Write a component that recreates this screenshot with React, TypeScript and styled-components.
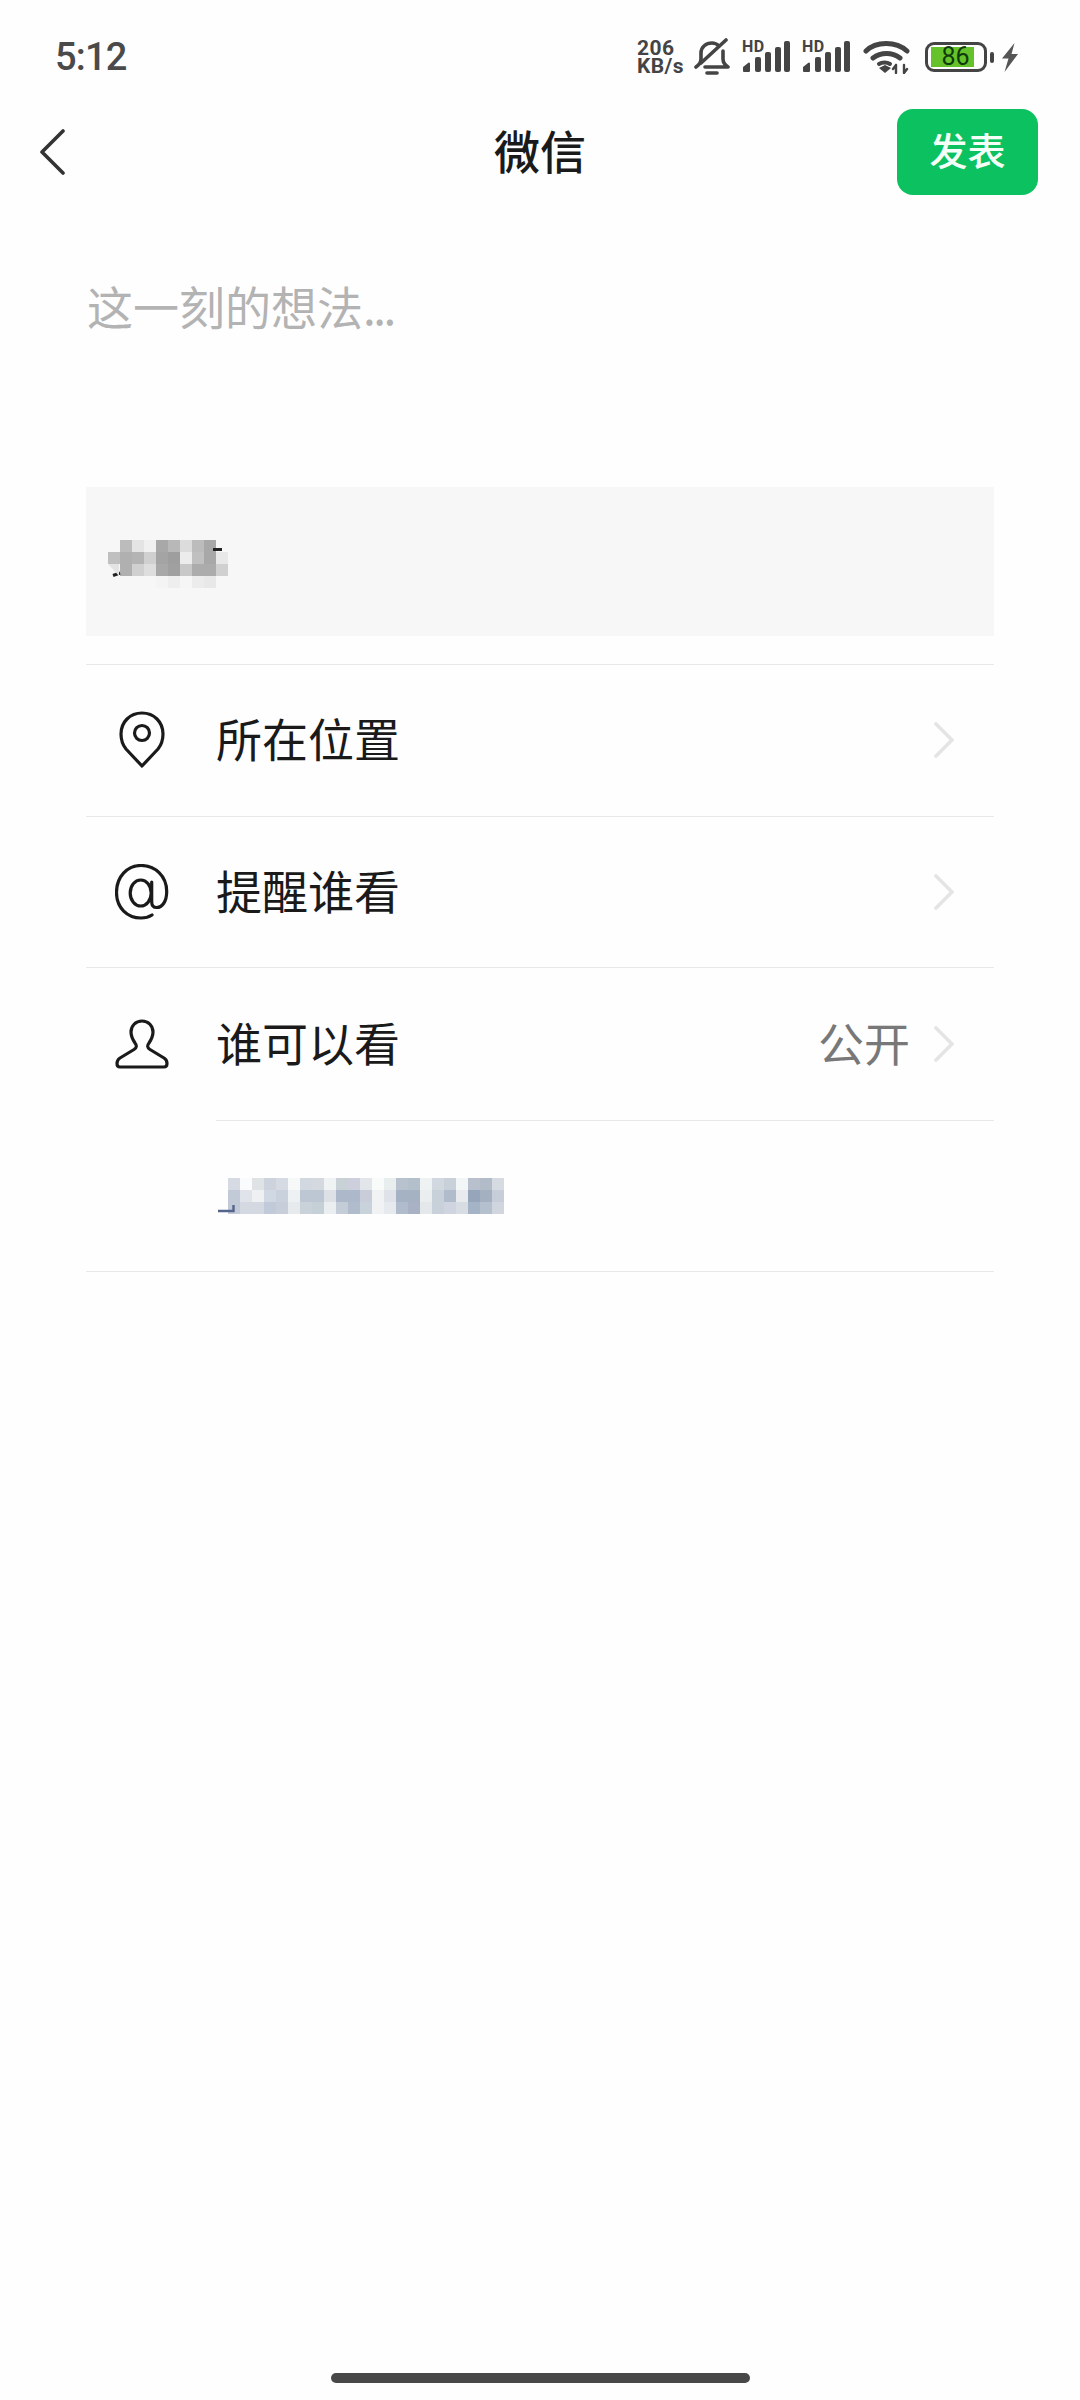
import React from "react";
import styled, { createGlobalStyle } from "styled-components";

const GlobalStyle = createGlobalStyle`
  html, body {
    margin: 0;
    padding: 0;
    background: #fefefe;
  }
  * {
    box-sizing: border-box;
  }
`;

const CJK = `"Noto Sans CJK SC", "Noto Sans", sans-serif`;
const INK = "#444444";

const Page = styled.div`
  width: 1080px;
  height: 2400px;
  display: flex;
  flex-direction: column;
  background: #fefefe;
  font-family: ${CJK};
  overflow: hidden;
`;

const StatusBar = styled.div`
  height: 100px;
  padding: 14px 62px 0 55px;
  display: flex;
  align-items: center;
  justify-content: space-between;
`;

const Time = styled.span`
  font-family: Roboto, sans-serif;
  font-size: 38px;
  font-weight: 500;
  line-height: 1;
  letter-spacing: -0.8px;
  color: #4a4a4a;
`;

const StatusIcons = styled.div`
  display: flex;
  align-items: center;
`;

const Speed = styled.div`
  font-family: Roboto, sans-serif;
  font-weight: 700;
  font-size: 21px;
  line-height: 18px;
  letter-spacing: 0.4px;
  color: ${INK};
  margin-right: 10px;
`;

const StatusIcon = styled.svg<{ $left?: number; $right?: number }>`
  flex: none;
  display: block;
  margin-left: ${(props) => props.$left || 0}px;
  margin-right: ${(props) => props.$right || 0}px;
`;

const Signal = styled.div<{ $left?: number }>`
  position: relative;
  width: 50px;
  height: 34px;
  margin-left: ${(props) => props.$left || 0}px;
`;

const SignalLabel = styled.span`
  position: absolute;
  top: 0;
  left: 0;
  font-family: Roboto, sans-serif;
  font-weight: 700;
  font-size: 16px;
  line-height: 13px;
  letter-spacing: 0.5px;
  color: ${INK};
`;

const Battery = styled.div`
  width: 62px;
  height: 30px;
  margin: 0 3px 0 14px;
  border: 3.5px solid ${INK};
  border-radius: 9px;
  padding: 2px 10px 2px 3px;
`;

const BatteryFill = styled.div`
  height: 100%;
  padding-left: 6px;
  background: #66c22a;
  color: #0f3a0a;
  font-family: Roboto, sans-serif;
  font-size: 25px;
  line-height: 19px;
  text-align: center;
`;

const BatteryNub = styled.div`
  width: 4px;
  height: 11px;
  border-radius: 2px;
  background: ${INK};
  margin-right: 7px;
`;

const NavBar = styled.div`
  height: 104px;
  padding: 0 42px;
  display: grid;
  grid-template-columns: 1fr auto 1fr;
  align-items: center;
`;

const BackButton = styled.div`
  display: flex;
  margin-left: -3px;
`;

const Title = styled.div`
  font-size: 46px;
  font-weight: 500;
  line-height: 1;
  color: #1a1a1a;
  padding-bottom: 7px;
`;

const PublishButton = styled.button`
  justify-self: end;
  width: 141px;
  height: 86px;
  border: none;
  border-radius: 16px;
  background: #0bc160;
  color: #f4fff8;
  font-family: ${CJK};
  font-size: 38px;
  font-weight: 500;
  padding: 0 0 7px;
`;

const Composer = styled.div`
  padding: 59px 86px 0;
  display: flex;
  flex-direction: column;
`;

const Placeholder = styled.div`
  font-size: 46px;
  line-height: 84px;
  height: 224px;
  padding-left: 1px;
  color: #b3b3b3;
`;

const PlaceholderDots = styled.span`
  letter-spacing: -2.5px;
`;

const QuoteBox = styled.div`
  height: 149px;
  background: #f7f7f7;
  display: flex;
  align-items: flex-start;
  padding: 53px 0 0 22px;
  margin-bottom: 28px;
`;

const List = styled.div`
  border-top: 1.5px solid #e8e8e8;
`;

const Row = styled.div<{ $plain?: boolean }>`
  height: 151.5px;
  display: flex;
  align-items: center;
  border-bottom: ${(props) => (props.$plain ? "none" : "1.5px solid #e8e8e8")};
`;

const AudienceRow = styled.div`
  padding-left: 130px;
  border-bottom: 1.5px solid #e8e8e8;
`;

const AudienceCell = styled.div`
  height: 151px;
  padding-left: 12px;
  display: flex;
  align-items: center;
  border-top: 1.5px solid #e8e8e8;
`;

const IconSlot = styled.div`
  width: 130px;
  flex: none;
  display: flex;
  justify-content: center;
  padding-right: 18px;
`;

const Label = styled.div`
  flex: 1;
  font-size: 46px;
  line-height: 1;
  padding-bottom: 6px;
  color: #1a1a1a;
`;

const Value = styled.div`
  font-size: 46px;
  line-height: 1;
  padding-bottom: 6px;
  color: #787878;
  margin-right: 24px;
`;

const Chevron = styled.svg`
  flex: none;
  margin-right: 40px;
  display: block;
`;

const MosaicSvg = styled.svg`
  display: block;
  overflow: visible;
`;

const Spacer = styled.div`
  flex: 1;
`;

const HomeBar = styled.div`
  align-self: center;
  width: 419px;
  height: 10px;
  border-radius: 5px;
  background: #484848;
  margin-bottom: 17px;
`;

function SignalIcon({ left }: { left?: number }) {
  return (
    <Signal $left={left}>
      <SignalLabel>HD</SignalLabel>
      <svg width="50" height="34" viewBox="0 0 50 34">
        <path d="M2 31v-3.5l5-4V31Z" fill={INK} stroke={INK} strokeWidth="2" strokeLinejoin="round" />
        <rect x="13" y="17" width="6" height="15" rx="2" fill={INK} />
        <rect x="23" y="12" width="6" height="20" rx="2" fill={INK} />
        <rect x="33" y="7" width="6" height="25" rx="2" fill={INK} />
        <rect x="42" y="1" width="6" height="31" rx="2" fill={INK} />
      </svg>
    </Signal>
  );
}

function ChevronIcon() {
  return (
    <Chevron width="20" height="36" viewBox="0 0 20 36" fill="none" stroke="#e4e4e4" strokeWidth="3.6" strokeLinecap="round" strokeLinejoin="round">
      <path d="M2 2l16 16L2 34" />
    </Chevron>
  );
}

function Mosaic({ rows, cell, children }: { rows: string[][]; cell: number; children?: React.ReactNode }) {
  const w = Math.max(...rows.map((r) => r.length)) * cell;
  const h = rows.length * cell;
  return (
    <MosaicSvg width={w} height={h} viewBox={`0 0 ${w} ${h}`}>
      <g shapeRendering="crispEdges">
        {rows.flatMap((row, y) =>
          row.map((fill, x) =>
            fill ? <rect key={`${x}-${y}`} x={x * cell} y={y * cell} width={cell} height={cell} fill={fill} /> : null
          )
        )}
      </g>
      {children}
    </MosaicSvg>
  );
}

const quoteRows: string[][] = [
  ["", "#bcbcbc", "#e4e4e4", "#f0f0f0", "#a8a8a8", "#b8b8b8", "#dcdcdc", "#bcbcbc", "#a8a8a8", ""],
  ["#c0c0c0", "#b0b0b0", "#b4b4b4", "#d0d0d0", "#a4a4a4", "#9e9e9e", "#ececec", "#c0c0c0", "#a8a8a8", "#e8e8e8"],
  ["", "#b0b0b0", "#d0d0d0", "#dedede", "#a8a8a8", "#a0a0a0", "#c8c8c8", "#acacac", "#acacac", "#d0d0d0"],
  ["", "", "", "", "#f4f4f4", "#eeeeee", "#f6f6f6", "#ececec", "#e8e8e8", ""],
];

const audienceRows: string[][] = [
  ["#d6dae2", "#fafbfc", "#dfe3e6", "#cdd3dd", "#d6dae3", "#f7f9f9", "#d2d8df", "#d4d9e0", "#f0f3f4", "#c8d2d6", "#cdcfdd", "#e2e5ea", "#f9fafa", "#e8eded", "#b8c2cf", "#b4bfcc", "#eff2f3", "#d2d8e0", "#c8d0da", "#f3f6f6", "#b8c0ce", "#b2bcc9", "#d6dbe2"],
  ["#c3cad7", "#e0e4ea", "#eef0f2", "#d0d9e3", "#c9d1dc", "#eef1f3", "#bcc7d3", "#bcc7d3", "#dde1e6", "#adb8ca", "#adb8ca", "#c9cdd9", "#f0f2f4", "#dfe3e9", "#a4b2c4", "#a4b2c2", "#eaeeef", "#c8d0da", "#b0bbcc", "#e8eaee", "#97a5ba", "#a4b0c0", "#c8ced9"],
  ["#c3cad7", "#d4d8e0", "#d4d8e0", "#c0cad8", "#c8ced9", "#e6eaed", "#c8d2d8", "#c4d0d6", "#eaeef0", "#c4ccd8", "#b0bbcc", "#c8d2da", "#f0f2f4", "#e6e9ed", "#b0bbcb", "#a8b2c4", "#e4e8ea", "#c8d0da", "#cfd4e0", "#d8dde3", "#a4b4c6", "#b4c0ce", "#d0d5de"],
];

export default function App() {
  return (
    <Page>
      <GlobalStyle />
      <StatusBar>
        <Time>5:12</Time>
        <StatusIcons>
          <Speed>
            206
            <br />
            KB/s
          </Speed>
          <StatusIcon $right={12} width="36" height="38" viewBox="0 0 36 38" fill="none" stroke={INK} strokeWidth="3.6" strokeLinecap="round" strokeLinejoin="round">
            <path d="M2 29c3-2 5-4 5-8v-6c0-6 5-10 11-10 3 0 5 1 7 3" />
            <path d="M29 13v8c0 4 2 6 5 8H11" />
            <path d="M7 25 32 2" />
            <path d="M13 35h10" />
          </StatusIcon>
          <SignalIcon />
          <SignalIcon left={10} />
          <StatusIcon $left={11} width="48" height="34" viewBox="0 0 48 34" fill="none" stroke={INK} strokeWidth="5" strokeLinecap="round">
            <path d="M3 11C13 1 33 1 44 11" />
            <path d="M10 18c8-6 19-6 27 0" />
            <path d="M16 24c3-2 8-2 11 0" strokeWidth="4" />
            <path d="M16 28l6-3 6 3-6 5Z" fill={INK} stroke="none" />
            <path d="M33 25v8M30 29l3-4M41 25v8M44 29l-3 4" strokeWidth="2.4" />
          </StatusIcon>
          <Battery>
            <BatteryFill>86</BatteryFill>
          </Battery>
          <BatteryNub />
          <svg width="17" height="29" viewBox="0 0 17 29">
            <path d="M13.500 0 1 15.500h6.500L3.500 29 17 11h-6.500Z" fill="#555555" />
          </svg>
        </StatusIcons>
      </StatusBar>

      <NavBar>
        <BackButton>
          <svg width="26" height="46" viewBox="0 0 26 46" fill="none" stroke="#333333" strokeWidth="3.6" strokeLinecap="round" strokeLinejoin="round">
            <path d="M24 2 3 23l21 21" />
          </svg>
        </BackButton>
        <Title>微信</Title>
        <PublishButton>发表</PublishButton>
      </NavBar>

      <Composer>
        <Placeholder>
          这一刻的想法<PlaceholderDots>...</PlaceholderDots>
        </Placeholder>
        <QuoteBox>
          <Mosaic rows={quoteRows} cell={12}>
            <path d="M105 9.5h9" stroke="#222222" strokeWidth="3" />
            <path d="M5 35.5l7-2.5" stroke="#222222" strokeWidth="3" />
            <path d="M0 24h11v12Z" fill="#e4e4e4" />
          </Mosaic>
        </QuoteBox>
        <List>
          <Row>
            <IconSlot>
              <svg width="46" height="58" viewBox="0 0 46 58" fill="none" stroke="#1a1a1a" strokeWidth="3.2" strokeLinejoin="round">
                <path d="M23 55 7 38C3 33 2 28 2 23 2 11 11 2 23 2s21 9 21 21c0 5-1 10-5 15Z" />
                <circle cx="23" cy="22" r="7.5" />
              </svg>
            </IconSlot>
            <Label>所在位置</Label>
            <ChevronIcon />
          </Row>
          <Row>
            <IconSlot>
              <svg width="54" height="56" viewBox="0 0 54 56" fill="none" stroke="#1a1a1a" strokeWidth="3.2" strokeLinecap="round">
                <ellipse cx="25.7" cy="29" rx="10.5" ry="13" />
                <path d="M36.700 18v20c0 3.500 2 5.500 5 5.500 5.500 0 10-6 10-16C51.700 12 40 1.500 26 1.500 12 1.500 1.500 13 1.500 28.500S12.500 54 26 54c4 0 8-1 11-3" />
              </svg>
            </IconSlot>
            <Label>提醒谁看</Label>
            <ChevronIcon />
          </Row>
          <Row $plain>
            <IconSlot>
              <svg width="54" height="50" viewBox="0 0 54 50" fill="none" stroke="#1a1a1a" strokeWidth="3.2" strokeLinejoin="round">
                <path d="M27 2c-6.500 0-11 5-11 11 0 5 2 8 4 11 2 2.500 2 4.500-1 6.500L5 39c-4 2.500-4 9 0 9h44c4 0 4-6.500 0-9L35 30.500c-3-2-3-4-1-6.500 2-3 4-6 4-11 0-6-4.500-11-11-11Z" />
              </svg>
            </IconSlot>
            <Label>谁可以看</Label>
            <Value>公开</Value>
            <ChevronIcon />
          </Row>
          <AudienceRow>
            <AudienceCell>
              <Mosaic rows={audienceRows} cell={12}>
                <path d="M-10 33H5.500V27" fill="none" stroke="#56648c" strokeWidth="2.400" />
              </Mosaic>
            </AudienceCell>
          </AudienceRow>
        </List>
      </Composer>

      <Spacer />
      <HomeBar />
    </Page>
  );
}
